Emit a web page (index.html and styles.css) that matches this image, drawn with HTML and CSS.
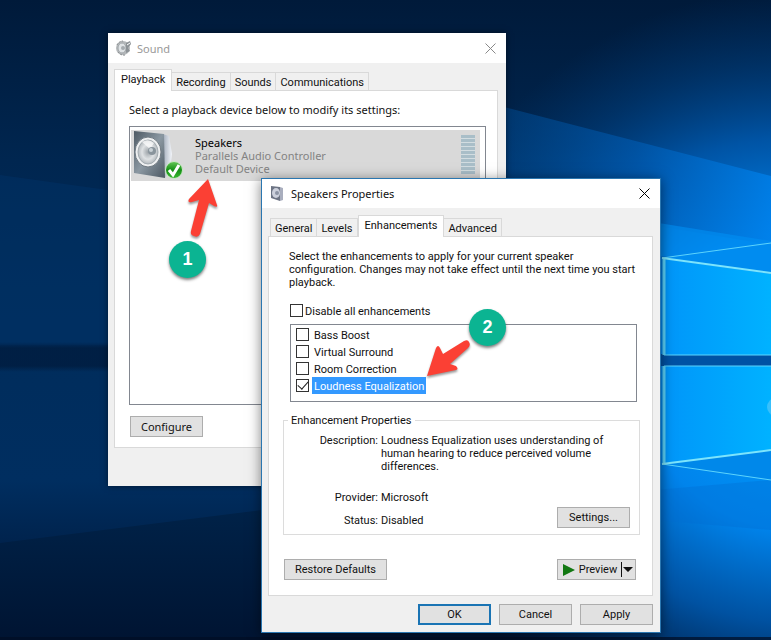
FILE: index.html
```
<!DOCTYPE html>
<html lang="en">
<head>
  <meta charset="UTF-8" />
  <meta name="viewport" content="width=device-width, initial-scale=1.0"/>
  <title>Sound</title>
  <link rel="stylesheet" href="styles.css">
</head>
<body>
  <main class="desktop">
    <!-- Wallpaper -->
    <svg class="wallpaper" viewBox="0 0 771 640" preserveAspectRatio="none" aria-hidden="true">
      <defs>
        <linearGradient id="base" x1="0" y1="0" x2="0" y2="1">
          <stop offset="0" stop-color="#001a3a"/>
          <stop offset="0.25" stop-color="#002650"/>
          <stop offset="0.45" stop-color="#002c5a"/>
          <stop offset="0.75" stop-color="#002e60"/>
          <stop offset="1" stop-color="#001230"/>
        </linearGradient>
        <radialGradient id="glow" gradientUnits="userSpaceOnUse" cx="790" cy="380" r="390">
          <stop offset="0" stop-color="#00a0ff"/>
          <stop offset="0.38" stop-color="#0084ec"/>
          <stop offset="0.62" stop-color="#005cb4" stop-opacity="0.85"/>
          <stop offset="0.82" stop-color="#004488" stop-opacity="0.45"/>
          <stop offset="1" stop-color="#003a78" stop-opacity="0"/>
        </radialGradient>
        <linearGradient id="beam" x1="0" y1="0" x2="1" y2="0">
          <stop offset="0" stop-color="#004a90" stop-opacity="0.5"/>
          <stop offset="0.5" stop-color="#005cb4" stop-opacity="0.6"/>
          <stop offset="1" stop-color="#0080ea" stop-opacity="0.8"/>
        </linearGradient>
        <linearGradient id="pane" x1="0" y1="0" x2="1" y2="0">
          <stop offset="0" stop-color="#0096fa"/>
          <stop offset="1" stop-color="#00b2ff"/>
        </linearGradient>
        <linearGradient id="band" x1="0" y1="0" x2="0" y2="1">
          <stop offset="0" stop-color="#001838" stop-opacity="0"/>
          <stop offset="0.2" stop-color="#001634"/>
          <stop offset="0.8" stop-color="#001634"/>
          <stop offset="1" stop-color="#001838" stop-opacity="0"/>
        </linearGradient>
        <linearGradient id="foot" x1="0" y1="0" x2="0" y2="1">
          <stop offset="0" stop-color="#002248"/>
          <stop offset="1" stop-color="#001432"/>
        </linearGradient>
      </defs>
      <rect width="771" height="640" fill="url(#base)"/>
      <rect width="771" height="640" fill="url(#glow)"/>
      <path d="M0 175 L108 190 L108 345 L0 345Z" fill="#003468" opacity="0.45"/>
      <path d="M500 106 L771 176 L771 245 L500 200Z" fill="url(#beam)"/>
      <path d="M640 220 L771 241 L771 262 L640 255Z" fill="#0090f4" opacity="0.6"/>
      <rect y="342" width="262" height="30" fill="url(#band)" opacity="0.6"/>
      <path d="M0 543 L262 510 L262 640 L0 640Z" fill="url(#foot)"/>
      <path d="M655 490 L771 480 L771 530 L655 520Z" fill="#006cd0" opacity="0.35"/>
      <rect x="655" y="354" width="116" height="12" fill="#0052a4"/>
      <path d="M663 258 L771 243 L771 274Z" fill="#008cf0"/>
      <path d="M664 259 L771 274 L771 355 L664 355Z" fill="url(#pane)"/>
      <path d="M664 366 L771 366 L771 450 L664 464Z" fill="url(#pane)"/>
      <path d="M663 464 L771 450 L771 480Z" fill="#0088ea"/>
      <g fill="none" stroke="#5cd4fc">
        <path d="M662 258 L771 243"/>
        <path d="M662 464 L771 480"/>
        <path d="M664 355 H771 M664 366 H771" stroke-width="1"/>
        <path d="M664 258 V355 M664 366 V464" stroke-width="3"/>
        <path d="M662 258 L771 273 M662 464 L771 450" stroke="#7ce4fc" stroke-width="2"/>
      </g>
      <circle cx="776" cy="407" r="9" fill="#38c0fc"/>
      <rect y="637" width="771" height="3" fill="#000d24" opacity="0.7"/>
    </svg>

    <!-- Sound window -->
    <section class="window sound" aria-label="Sound">
      <header class="titlebar">
        <svg class="title-icon" viewBox="0 0 16 16" aria-hidden="true">
          <circle cx="7" cy="8" r="7" fill="#b4b8ba"/>
          <path d="M1 5 A7 7 0 0 1 7 1 M2 12 A7 7 0 0 0 9 15" stroke="#85898c" stroke-dasharray="2 1" fill="none"/>
          <ellipse cx="6" cy="8" rx="4" ry="5" fill="#dfe3e5" stroke="#a2a7ab"/>
          <circle cx="7" cy="8" r="2" fill="#a5abaf"/>
          <path d="M10 3 L14 1 L15 4 L12 8 L14 11 L10 13Z" fill="#8c9296"/>
          <path d="M11 5 L14 3" stroke="#fff"/>
        </svg>
        <h1 class="title">Sound</h1>
        <button class="close" type="button" aria-label="Close">
          <svg viewBox="0 0 11 11"><path d="M0.5 0.5 L10.5 10.5 M10.5 0.5 L0.5 10.5"/></svg>
        </button>
      </header>
      <div class="tabs" role="tablist">
        <button class="tab active" type="button" role="tab" aria-selected="true">Playback</button>
        <button class="tab" type="button" role="tab">Recording</button>
        <button class="tab" type="button" role="tab">Sounds</button>
        <button class="tab" type="button" role="tab">Communications</button>
      </div>
      <div class="panel playback">
        <p class="hint">Select a playback device below to modify its settings:</p>
        <div class="devices">
          <div class="device">
            <svg class="device-icon" viewBox="0 0 52 50" aria-hidden="true">
              <defs>
                <linearGradient id="front" x1="0" y1="0" x2="1" y2="1">
                  <stop offset="0" stop-color="#4e5a64"/>
                  <stop offset="0.5" stop-color="#8b98a2"/>
                  <stop offset="1" stop-color="#4c5862"/>
                </linearGradient>
                <linearGradient id="side" x1="0" y1="0" x2="1" y2="0">
                  <stop offset="0" stop-color="#a4aebc"/>
                  <stop offset="1" stop-color="#f2f5fa"/>
                </linearGradient>
                <radialGradient id="cone">
                  <stop offset="0" stop-color="#9da4a9"/>
                  <stop offset="0.6" stop-color="#dfe2e4"/>
                  <stop offset="1" stop-color="#b5bbbf"/>
                </radialGradient>
                <linearGradient id="tick" x1="0" y1="0" x2="0" y2="1">
                  <stop offset="0" stop-color="#66c858"/>
                  <stop offset="0.5" stop-color="#159015"/>
                  <stop offset="1" stop-color="#3cb834"/>
                </linearGradient>
              </defs>
              <path d="M32 4 L38 6 L41 24 L39 40 L34 48Z" fill="url(#side)"/>
              <path d="M3 1 L33 4 L34 48 L3 43Z" fill="url(#front)"/>
              <ellipse cx="17" cy="22" rx="13" ry="15" fill="#eef0f1" stroke="#707a82"/>
              <ellipse cx="17" cy="22" rx="10" ry="12" fill="url(#cone)" stroke="#a3abb0"/>
              <path d="M11 12 Q17 8 23 13 L19 19Z" fill="#fff" opacity="0.7"/>
              <circle cx="21" cy="21" r="4" fill="#89949c"/>
              <circle cx="20" cy="20" r="2" fill="#c8d0d5"/>
              <circle cx="43" cy="40" r="8.5" fill="url(#tick)" stroke="#cfe8cc"/>
              <path d="M38 40 L42 45 L48 35" fill="none" stroke="#fff" stroke-width="3"/>
            </svg>
            <div class="device-text">
              <div class="device-name">Speakers</div>
              <div>Parallels Audio Controller</div>
              <div>Default Device</div>
            </div>
            <div class="meter"></div>
          </div>
        </div>
        <button class="btn" type="button">Configure</button>
      </div>
    </section>

    <!-- Speakers Properties window -->
    <section class="window properties" aria-label="Speakers Properties">
      <header class="titlebar">
        <svg class="title-icon" viewBox="0 0 16 16" aria-hidden="true">
          <path d="M1 0 L10 1 L10 15 L1 12Z" fill="#6d7484"/>
          <path d="M10 1 L13 2 L13 14 L10 15Z" fill="#a9aebe"/>
          <ellipse cx="6" cy="7" rx="4" ry="5" fill="#ccd0dc"/>
          <ellipse cx="7" cy="7" rx="2" ry="2" fill="#8d94a5"/>
        </svg>
        <h2 class="title">Speakers Properties</h2>
        <button class="close" type="button" aria-label="Close">
          <svg viewBox="0 0 11 11"><path d="M0.5 0.5 L10.5 10.5 M10.5 0.5 L0.5 10.5"/></svg>
        </button>
      </header>
      <div class="tabs" role="tablist">
        <button class="tab" type="button" role="tab">General</button>
        <button class="tab" type="button" role="tab">Levels</button>
        <button class="tab active" type="button" role="tab" aria-selected="true">Enhancements</button>
        <button class="tab" type="button" role="tab">Advanced</button>
      </div>
      <div class="panel enhancements">
        <p class="intro">Select the enhancements to apply for your current speaker configuration. Changes may not take effect until the next time you start playback.</p>
        <label class="check disable-all"><input type="checkbox"><span>Disable all enhancements</span></label>
        <div class="effects">
          <label class="check"><input type="checkbox"><span>Bass Boost</span></label>
          <label class="check"><input type="checkbox"><span>Virtual Surround</span></label>
          <label class="check"><input type="checkbox"><span>Room Correction</span></label>
          <label class="check selected"><input type="checkbox" checked><span>Loudness Equalization</span></label>
        </div>
        <fieldset class="group">
          <legend>Enhancement Properties</legend>
          <dl class="details">
            <dt>Description:</dt>
            <dd class="description">Loudness Equalization uses understanding of human hearing to reduce perceived volume differences.</dd>
            <dt>Provider:</dt>
            <dd>Microsoft</dd>
            <dt>Status:</dt>
            <dd>Disabled</dd>
          </dl>
          <button class="btn" type="button">Settings...</button>
        </fieldset>
        <div class="actions">
          <button class="btn wide" type="button">Restore Defaults</button>
          <button class="btn preview" type="button">
            <svg class="play" viewBox="0 0 12 12" aria-hidden="true"><path d="M0 0 L12 6 L0 12Z"/></svg>
            <span>Preview</span>
            <svg class="drop" viewBox="0 0 12 15" aria-hidden="true"><path d="M0 0 H1 V15 H0Z M2 5 H12 L7 10Z"/></svg>
          </button>
        </div>
      </div>
      <footer class="footer">
        <button class="btn default" type="button">OK</button>
        <button class="btn" type="button">Cancel</button>
        <button class="btn" type="button">Apply</button>
      </footer>
    </section>

    <!-- Step markers -->
    <svg class="arrow arrow-one" viewBox="0 0 34 62" aria-hidden="true">
      <path d="M22 1 L31 27 Q32 30 28 28 L23 25 L14 56 Q12 60 8 58 Q4 57 5 53 L13 22 L6 24 Q1 25 3 21Z"/>
    </svg>
    <svg class="arrow arrow-two" viewBox="0 0 48 42" aria-hidden="true">
      <path d="M2 38 L11 10 Q13 6 15 10 L18 16 L39 3 Q43 1 44 4 Q46 7 43 10 L25 26 L31 28 Q34 31 31 32Z"/>
    </svg>
    <div class="step step-one">1</div>
    <div class="step step-two">2</div>
  </main>
</body>
</html>
```
FILE: styles.css
```
* {
  box-sizing: border-box;
}

body {
  margin: 0;
  font-family: Roboto, sans-serif;
  font-size: 11px;
  line-height: 13px;
  color: #111;
}

h1, h2, p, dl, dd {
  margin: 0;
}

button {
  font: inherit;
  color: inherit;
  padding: 0;
}

.desktop {
  position: relative;
  min-height: 100vh;
  overflow: hidden;
  background: #00244f;
}

.wallpaper {
  position: absolute;
  width: 100%;
  height: 100%;
}

/* Windows */
.window {
  position: absolute;
  background: #f0f0f0;
}

.sound {
  left: 108px;
  top: 33px;
  width: 398px;
  padding: 0 8px 38px 6px;
  box-shadow: 0 0 6px rgba(0, 0, 0, 0.5);
}

.properties {
  left: 261px;
  top: 178px;
  width: 400px;
  padding: 0 7px 7px 6px;
  border: 1px solid #2a76b0;
  box-shadow: 0 2px 12px rgba(0, 0, 0, 0.5);
}

.titlebar {
  display: flex;
  align-items: center;
  height: 30px;
  margin: 0 -8px 0 -6px;
  padding: 0 10px 0 8px;
  background: #fff;
}

.properties .titlebar {
  height: 29px;
  margin-right: -7px;
}

.title-icon {
  width: 16px;
  height: 16px;
}

.title {
  flex: 1;
  margin-left: 5px;
  font-family: 'Noto Sans', sans-serif;
  font-size: 11px;
  font-weight: normal;
}

.sound .title {
  color: #999;
}

.close {
  display: flex;
  border: none;
  background: none;
}

.close svg {
  width: 11px;
  height: 11px;
  fill: none;
  stroke: #000;
}

.sound .close svg {
  stroke: #888;
}

/* Tabs */
.tabs {
  display: flex;
  align-items: flex-end;
  height: 27px;
}

.properties .tabs {
  height: 28px;
  padding-left: 2px;
}

.tab {
  height: 18px;
  padding: 1px 4px 0;
  border: 1px solid #d9d9d9;
  border-width: 1px 1px 0 0;
  background: #f0f0f0;
}

.tab:first-child {
  border-left-width: 1px;
}

.tab.active {
  position: relative;
  height: 22px;
  margin-bottom: -1px;
  padding: 0 6px 2px;
  border-left-width: 1px;
  background: #fff;
}

.panel {
  border: 1px solid #d9d9d9;
  background: #fff;
}

/* Sound window content */
.playback {
  padding: 12px 11px 10px 14px;
  font-family: 'Noto Sans', sans-serif;
}

.devices {
  height: 279px;
  margin: 10px 0 11px;
  padding: 3px 5px 0 1px;
  border: 1px solid #828790;
}

.device {
  display: flex;
  height: 51px;
  padding-right: 5px;
  background: #d9d9d9;
  color: #838383;
}

.device-icon {
  width: 52px;
  height: 50px;
}

.device-text {
  flex: 1;
  padding: 6px 0 0 12px;
}

.device-name {
  color: #000;
}

.meter {
  width: 14px;
  height: 39px;
  margin-top: 5px;
  background: repeating-linear-gradient(#a9bec8 0 3px, #d3dde1 3px 4px);
}

.btn {
  width: 73px;
  height: 21px;
  border: 1px solid #adadad;
  background: #e1e1e1;
}

.playback .btn {
  margin-left: 1px;
}

.btn.wide {
  width: 103px;
}

.btn.default {
  border: 2px solid #1a74b4;
}

/* Enhancements tab */
.enhancements {
  padding: 13px 12px 15px 14px;
}

.intro {
  padding-left: 6px;
}

.check {
  display: flex;
  align-items: center;
  height: 17px;
}

.check input {
  appearance: none;
  display: grid;
  place-items: center;
  width: 13px;
  height: 13px;
  margin: 0;
  border: 1px solid #333;
  background: #fff;
}

.check input:checked::before {
  content: "";
  width: 9px;
  height: 5px;
  margin-bottom: 3px;
  border: solid #222;
  border-width: 0 0 1px 1px;
  transform: rotate(-48deg);
}

.disable-all {
  margin: 13px 0 5px 7px;
}

.disable-all span {
  padding: 2px 0 0 2px;
}

.effects {
  height: 78px;
  margin: 0 3px 0 7px;
  padding: 1px 5px;
  border: 1px solid #828790;
}

.effects span {
  margin-left: 3px;
  padding: 3px 2px 1px;
}

.selected span {
  background: #3399ff;
  color: #fff;
}

.group {
  display: flex;
  align-items: flex-end;
  justify-content: space-between;
  min-width: 0;
  margin: 12px 0 0;
  padding: 7px 9px 6px 4px;
  border: 1px solid #dcdcdc;
}

.group legend {
  padding: 0 3px;
}

.details {
  display: grid;
  grid-template-columns: 90px 1fr;
  column-gap: 3px;
  row-gap: 10px;
  flex: 1;
  padding-bottom: 1px;
}

.details dt {
  text-align: right;
}

.description {
  min-height: 47px;
  margin-right: -50px;
}

.group .btn {
  flex: none;
}

.actions {
  display: flex;
  justify-content: space-between;
  margin-top: 24px;
  padding: 0 4px 0 1px;
}

.btn.preview {
  display: flex;
  align-items: center;
  justify-content: space-between;
  width: 79px;
  padding: 0 2px 0 5px;
}

.play {
  width: 12px;
  height: 12px;
  fill: #127812;
}

.drop {
  width: 12px;
  height: 15px;
  fill: #111;
}

.footer {
  display: flex;
  justify-content: flex-end;
  gap: 8px;
  padding-top: 8px;
}

/* Step markers */
.arrow {
  position: absolute;
  fill: #fb4034;
  filter: drop-shadow(0 2px 1px rgba(0, 0, 0, 0.4));
}

.arrow-one {
  left: 186px;
  top: 178px;
  width: 34px;
  height: 62px;
}

.arrow-two {
  left: 425px;
  top: 338px;
  width: 48px;
  height: 42px;
}

.step {
  position: absolute;
  width: 37px;
  height: 37px;
  border-radius: 50%;
  background: #0bb492;
  box-shadow: 0 2px 3px rgba(0, 0, 0, 0.5);
  color: #fff;
  font-family: 'Liberation Sans', sans-serif;
  font-size: 18px;
  font-weight: bold;
  line-height: 37px;
  text-align: center;
}

.step-one {
  left: 169px;
  top: 241px;
}

.step-two {
  left: 469px;
  top: 309px;
}
```
